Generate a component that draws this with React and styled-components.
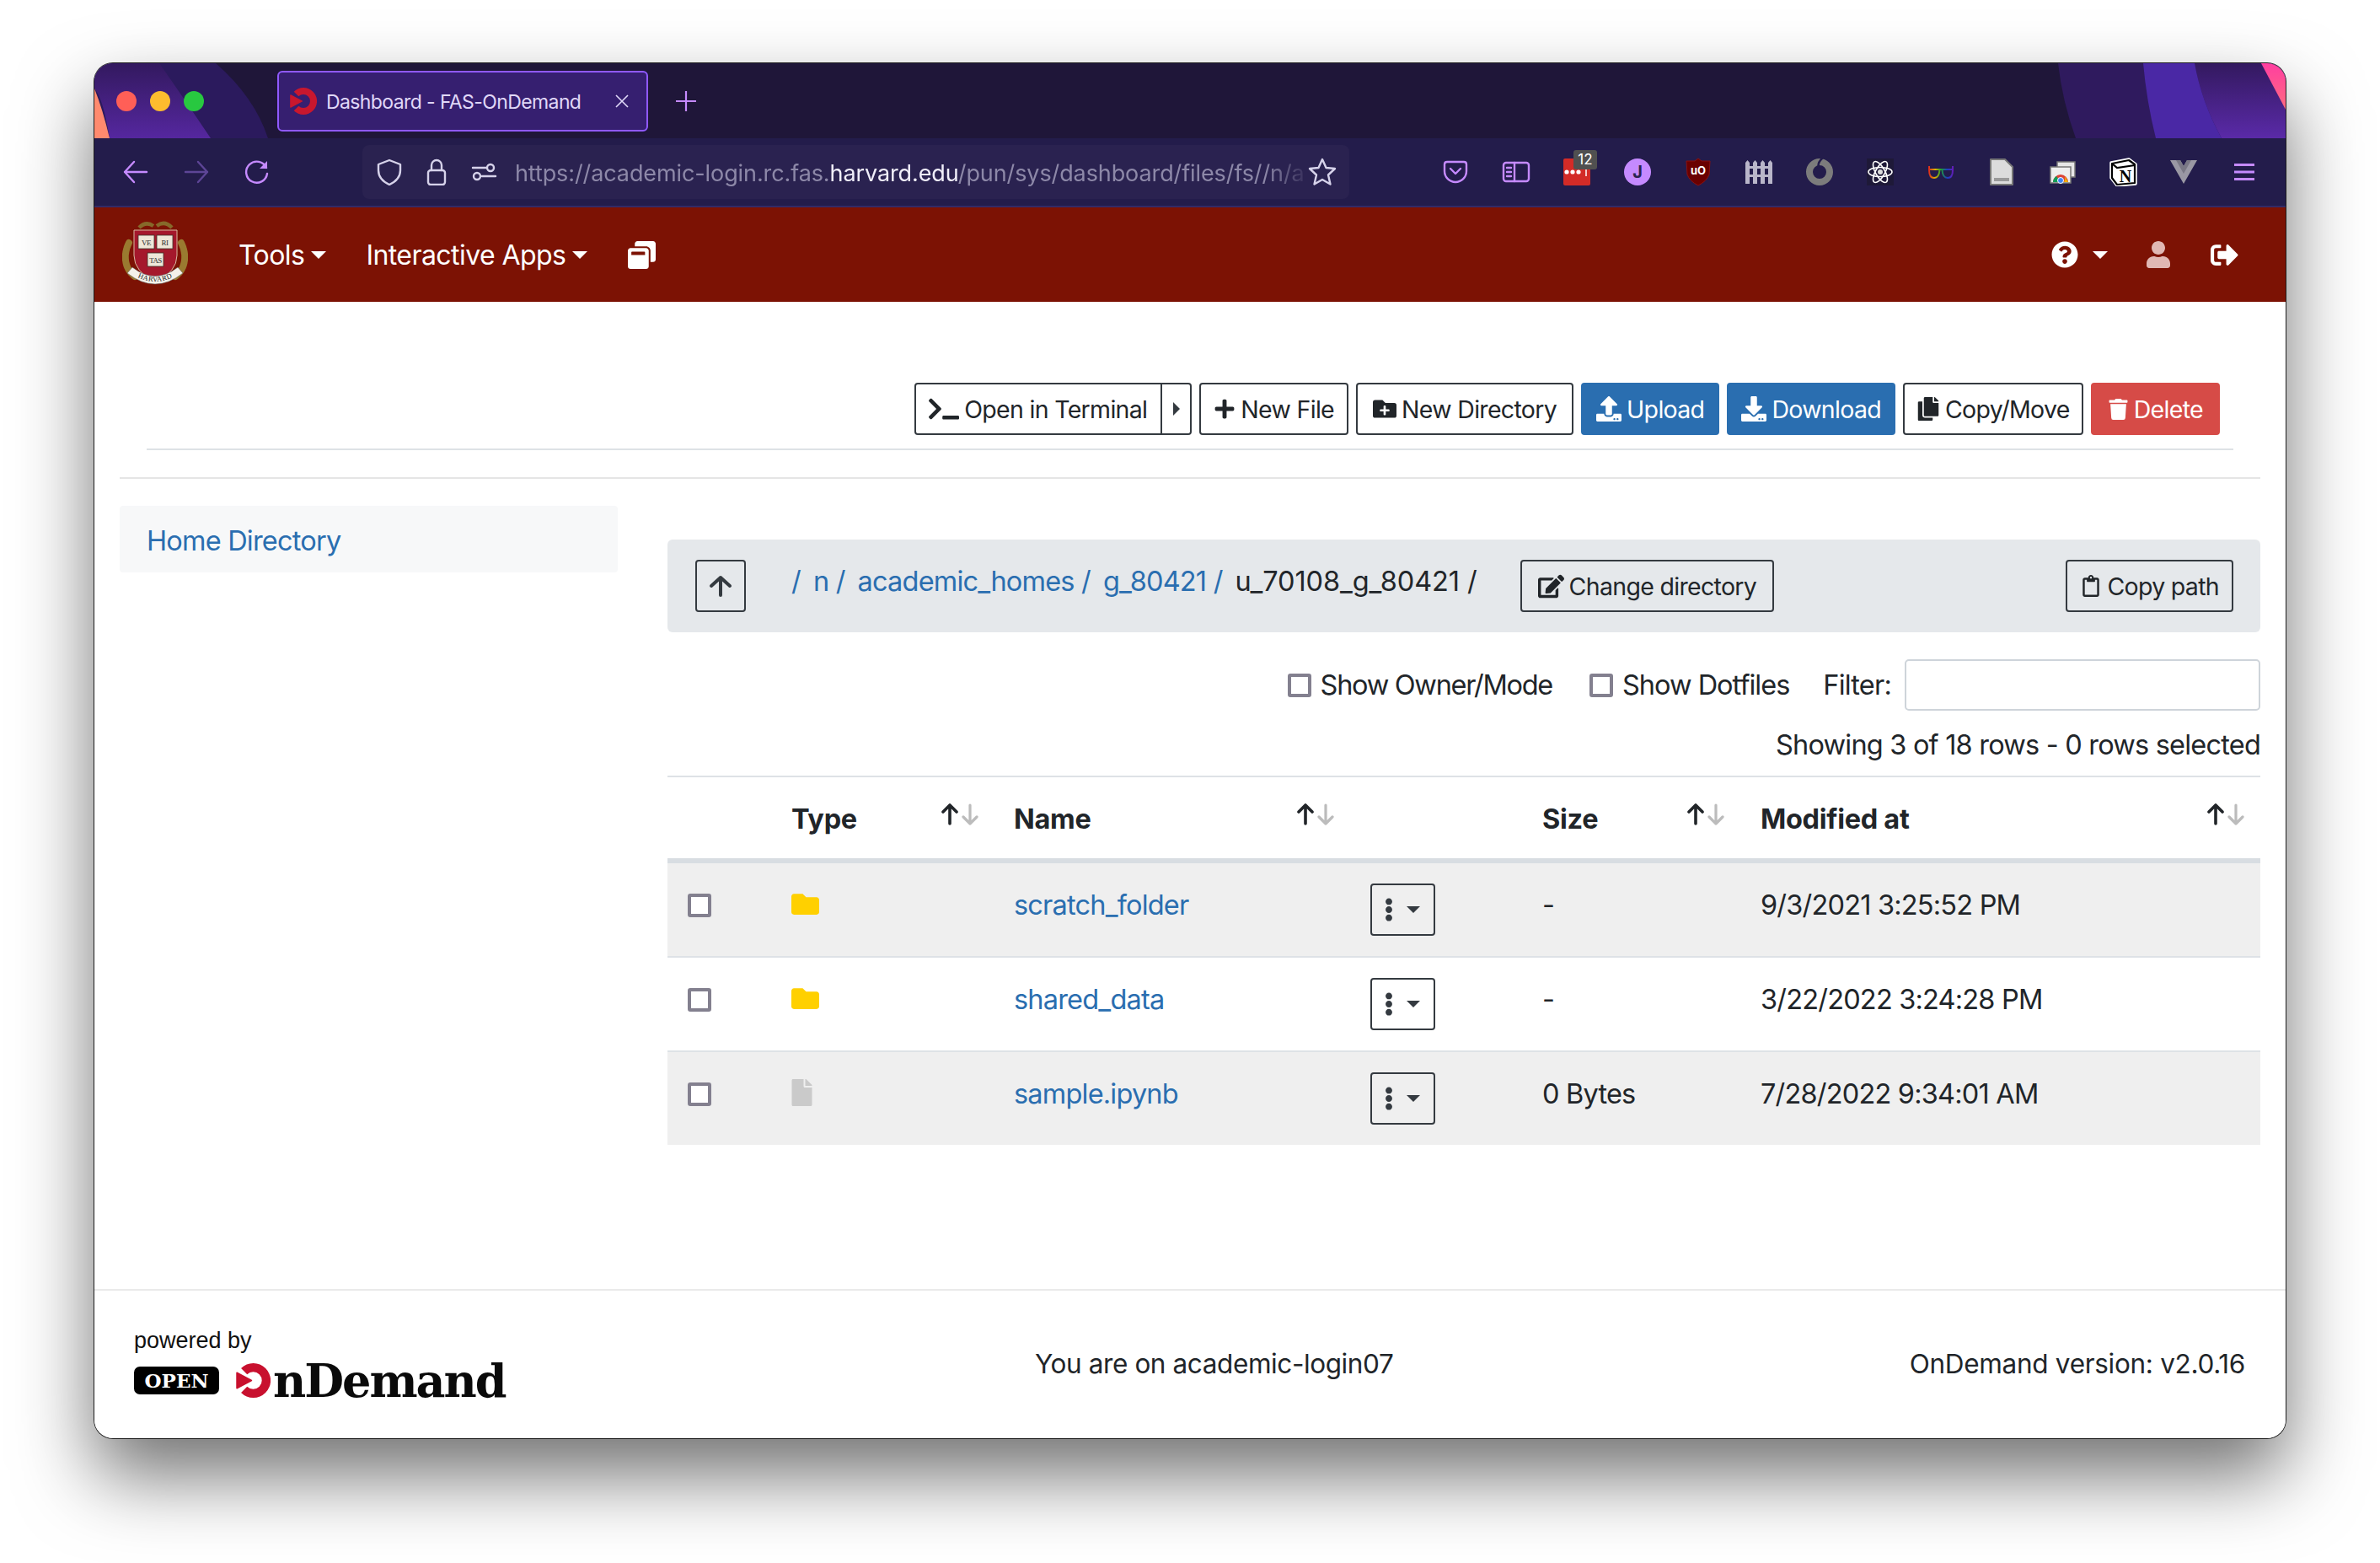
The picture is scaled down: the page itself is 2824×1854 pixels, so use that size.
import React from 'react';
import styled, { createGlobalStyle } from 'styled-components';
import { FaTerminal, FaPlus, FaFolderPlus, FaUpload, FaDownload, FaCopy, FaTrash, FaEdit, FaRegClipboard, FaFolder, FaFile, FaEllipsisV, FaQuestionCircle, FaUser, FaSignOutAlt, FaWindowRestore } from 'react-icons/fa';

const Global = createGlobalStyle`
  html, body { margin: 0; padding: 0; background: #fff; }
  body { width: 2824px; height: 1854px; overflow: hidden; font-family: Inter, Roboto, "Liberation Sans", sans-serif; color: #212529; }
  * { box-sizing: border-box; }
`;
const Page = styled.div`padding: 75px 112px 0;`;
const Win = styled.div`
  width: 2600px; height: 1631px; background: #fff; border-radius: 22px; overflow: hidden; position: relative;
  display: flex; flex-direction: column;
`;
const WinShadow = styled.div`
  border-radius: 22px; box-shadow: 0 44px 90px rgba(0,0,0,.56), 0 0 0 1px #2a2a2a;
`;
const TabBar = styled.div`
  height: 89px; background: #1f1639; display: flex; align-items: center; position: relative; padding-left: 217px; overflow: hidden;
`;
const Decor = styled.svg`position: absolute; top: 0; height: 89px;`;
const Lights = styled.div`position: absolute; left: 26px; top: 33px; display: flex; gap: 16px;`;
const Light = styled.span`width: 24px; height: 24px; border-radius: 50%; background: ${p => p.$c};`;
const Tab = styled.div`
  position: relative; width: 440px; height: 72px; margin-top: 1px; background: #361f70; border: 2px solid #9059ff; border-radius: 6px;
  display: flex; align-items: center; padding-left: 13px; color: #e0d8f8; font-size: 23px; letter-spacing: -.6px;
`;
const TabTitle = styled.span`margin-left: 11px; flex: 1; padding-top: 2px;`;
const TabClose = styled.svg`width: 16px; height: 16px; margin-right: 21px;`;
const NewTab = styled.svg`width: 26px; height: 26px; margin-left: 32px; position: relative;`;
const Toolbar = styled.div`
  height: 82px; background: #231c4b; border-bottom: 2px solid #332a66; display: flex; align-items: center; padding-left: 34px; position: relative;
`;
const NavBtn = styled.svg`width: 30px; height: 30px; margin-right: 42px; flex: none;`;
const UrlBar = styled.div`
  width: 1171px; height: 64px; background: #2a2250; border-radius: 8px; margin-left: 68px; display: flex; align-items: center; padding-left: 16px; position: relative; flex: none;
`;
const UrlIcon = styled.svg`width: 32px; height: 32px; margin-right: 24px; flex: none;`;
const UrlText = styled.div`
  font-size: 27px; color: #8d88a8; white-space: nowrap; letter-spacing: -.1px; flex: none; margin-left: -3px; padding-top: 2px;
  -webkit-mask-image: linear-gradient(90deg, #000 95%, rgba(0,0,0,.15) 100%);
  b { color: #f0eefa; font-weight: 400; }
`;
const Star = styled.svg`width: 34px; height: 34px; margin-left: auto; margin-right: 15px; flex: none;`;
const Ext = styled.div`display: flex; margin-left: 90px; align-items: center;`;
const ExtSlot = styled.div`width: 72px; height: 36px; display: flex; align-items: center; justify-content: center; position: relative;`;
const ExtSvg = styled.svg`width: 34px; height: 34px;`;
const Badge = styled.span`
  position: absolute; top: -8px; left: 32px; width: 28px; height: 23px; background: #505050; color: #fff; border-radius: 3px; font-size: 17px; text-align: center; line-height: 23px;
`;
const Nav = styled.div`
  height: 112px; background: #7c1204; display: flex; align-items: center; padding-left: 33px; padding-right: 56px; color: #fff; font-size: 32px; letter-spacing: -.56px;
`;
const NavItem = styled.div`display: flex; align-items: center; margin-right: ${p => p.$mr || 0}px; margin-left: ${p => p.$ml || 0}px; color: ${p => p.$c || '#fff'}; svg { display: block; }`;
const Caret = styled.span`
  width: 0; height: 0; border-left: 9px solid transparent; border-right: 9px solid transparent; border-top: 9px solid ${p => p.$c || '#fff'};
  margin-left: ${p => p.$ml || 8}px;
`;
const Spacer = styled.div`flex: 1;`;
const Content = styled.div`flex: 1; padding: 96px 30px 0; position: relative; letter-spacing: -.8px;`;
const ActionRow = styled.div`
  margin: 0 32px; height: 80px; border-bottom: 2px solid #dee2e6; display: flex; justify-content: flex-end; gap: 9px; padding-right: 16px; align-items: flex-start;
`;
const Btn = styled.div`
  height: 62px; padding: 0 ${p => p.$px || 17}px; display: flex; align-items: center; gap: ${p => p.$gap || 6}px; font-size: 28.5px; border-radius: 4px; white-space: nowrap; letter-spacing: -.68px;
  margin-left: ${p => p.$ml || 0}px;
  border: 2px solid ${p => p.$v === 'blue' ? '#2a6eb0' : p.$v === 'red' ? '#d64b47' : '#343a40'};
  background: ${p => p.$v === 'blue' ? '#2a6eb0' : p.$v === 'red' ? '#d64b47' : 'transparent'};
  color: ${p => p.$v ? '#fff' : '#212529'};
`;
const Split = styled.div`
  height: 62px; display: flex; border: 2px solid #343a40; border-radius: 4px; font-size: 28.5px; align-items: stretch; letter-spacing: -.68px;
`;
const SplitMain = styled.div`display: flex; align-items: center; gap: 6px; padding: 0 16px 0 15px; border-right: 2px solid #343a40; white-space: nowrap;`;
const SplitCaret = styled.div`display: flex; width: 33px; align-items: center; justify-content: center;`;
const CaretRight = styled.span`width: 0; height: 0; border-top: 8px solid transparent; border-bottom: 8px solid transparent; border-left: 8px solid #343a40;`;
const Hr = styled.div`height: 2px; background: #e5e5e5; margin-top: 32px;`;
const Cols = styled.div`display: flex; margin-top: 32px;`;
const Side = styled.div`
  width: 591px; height: 79px; background: #f7f8f9; border-radius: 4px; padding: 4px 0 0 32px; display: flex; align-items: center; color: #2a6eb0; font-size: 32.5px; flex: none;
`;
const Main = styled.div`margin-left: 59px; flex: 1;`;
const Crumbs = styled.div`
  margin-top: 40px; height: 110px; background: #e5e8eb; border-radius: 6px; display: flex; align-items: center; padding: 0 32px 0 33px; font-size: 32.5px;
`;
const UpBtn = styled.div`width: 60px; height: 62px; border: 2px solid #343a40; border-radius: 4px; display: flex; align-items: center; justify-content: center; flex: none;`;
const Path = styled.div`margin-left: 54px; display: flex; gap: 15px; margin-top: -11px; white-space: nowrap;`;
const PathLink = styled.span`color: ${p => p.$dark ? '#212529' : '#2a6eb0'}; letter-spacing: ${p => p.$dark ? '-.1px' : '-.8px'};`;
const Filters = styled.div`
  margin-top: 32px; height: 61px; display: flex; justify-content: flex-end; align-items: center; font-size: 32.5px;
`;
const Check = styled.span`
  display: inline-block; width: 28px; height: 28px; border: 4px solid #83808f; border-radius: 3px; background: #fff; flex: none; margin-right: ${p => p.$mr || 0}px;
`;
const FilterLabel = styled.span`margin-right: ${p => p.$mr}px; letter-spacing: ${p => p.$ls}px;`;
const Input = styled.div`width: 422px; height: 61px; border: 2px solid #ced4da; border-radius: 5px; background: #fff;`;
const Status = styled.div`margin-top: 21px; text-align: right; font-size: 32.5px; line-height: 40px;`;
const Grid = styled.div`display: grid; grid-template-columns: 147px 264px 423px 204px 259px 1fr; margin-top: 16px; border-top: 2px solid #dee2e6;`;
const Th = styled.div`
  height: 102px; border-bottom: 6px solid #d8dde2; display: flex; justify-content: space-between; padding-right: ${p => p.$pr || 0}px; font-weight: 700; font-size: 32.5px; padding-top: 30px; letter-spacing: -.3px;
`;
const SortSvg = styled.svg`width: 46px; height: 26px; flex: none; margin-top: 1px; fill: none; stroke-linecap: round; stroke-linejoin: round;`;
const Td = styled.div`
  height: ${p => p.$last ? 110 : 112}px; background: ${p => p.$odd ? '#efefef' : '#fff'}; border-bottom: ${p => p.$last ? 0 : 2}px solid #dee2e6;
  display: flex; align-items: flex-start; padding-top: ${p => p.$pt ?? 30}px; font-size: 32.5px; padding-left: ${p => p.$pl || 0}px; line-height: 40px;
  color: ${p => p.$link ? '#2a6eb0' : '#212529'};
  svg { display: block; }
`;
const FileGlyph = styled(FaFile)`width: 25px; height: 32px;`;
const MenuBtn = styled.div`width: 77px; height: 62px; border: 2px solid #343a40; border-radius: 4px; display: flex; align-items: center; padding-left: 6px; gap: 7px;`;
const MenuCaret = styled.span`width: 0; height: 0; border-left: 8px solid transparent; border-right: 8px solid transparent; border-top: 8px solid #343a40;`;
const Footer = styled.div`
  height: 177px; border-top: 2px solid #eaeaea; display: flex; align-items: center; padding: 0 48px 0 47px; font-size: 31.5px; letter-spacing: -.4px; position: relative;
`;
const Powered = styled.div`width: 1069px; flex: none; margin-bottom: 6px; letter-spacing: 0;`;
const PoweredText = styled.div`font-size: 27px; line-height: 34px; font-family: "Liberation Sans", sans-serif; color: #111;`;
const LogoRow = styled.div`display: flex; align-items: center; margin-top: 10px;`;
const OpenBadge = styled.span`
  width: 101px; height: 33px; background: #000; color: #fff; border-radius: 7px; font: 700 23px "DejaVu Serif", serif; display: flex; align-items: center; justify-content: center; flex: none;
`;
const LogoGap = styled.span`width: 20px; flex: none;`;
const Demand = styled.span`font: 700 54px/42px "DejaVu Serif", serif; color: #0a0a0a; margin-left: 3px; letter-spacing: -2px;`;
const Center = styled.div`margin-top: -2px;`;
const Right = styled.div`margin-top: -2px; margin-left: auto; letter-spacing: -.3px;`;

const Pur = '#c58aff';
const stroke = { fill: 'none', strokeWidth: 2.4, strokeLinecap: 'round', strokeLinejoin: 'round' };

const OdMark = ({ size = 41, c = '#c8102e' }) => (
  <svg width={size} height={size} viewBox="0 0 40 40" style={{ flex: 'none' }}>
    <path d="M5.900 5.900 A20 20 0 1 1 5.900 34.100 L12.900 27.100 A10 10 0 1 0 12.900 12.900 Z" fill={c} />
    <path d="M1 11 L18 20 L1 29 Z" fill={c} stroke={c} strokeWidth="1.500" strokeLinejoin="round" />
  </svg>
);

const Harvard = () => (
  <svg width="78" height="80" viewBox="0 0 78 80" style={{ flex: 'none' }}>
    <g fill="none" stroke="#9a7a30" strokeWidth="8" strokeLinecap="round" strokeDasharray="6 2">
      <path d="M8 26 C0 42 4 58 15 66" />
      <path d="M70 26 C78 42 74 58 63 66" />
    </g>
    <path d="M20 8 Q28 0 37 6 M41 6 Q50 -1 59 8" stroke="#86692a" strokeWidth="4.500" fill="none" />
    <path d="M14 11 H65 V41 Q65 60 39.500 73 Q14 60 14 41 Z" fill="#a5182c" stroke="#d8b9a0" strokeWidth="1" />
    <g fill="#eee7d8" stroke="#3c3228" strokeWidth=".8">
      <rect x="19" y="17" width="19" height="16" />
      <rect x="41" y="17" width="19" height="16" />
      <rect x="30" y="38" width="19" height="16" />
    </g>
    <g fontFamily="Liberation Serif, serif" fontSize="9" fill="#2c2c2c" textAnchor="middle">
      <text x="28.500" y="28.500">VE</text>
      <text x="50.500" y="28.500">RI</text>
      <text x="39.500" y="49.500">TAS</text>
    </g>
    <path d="M6 62 Q39 88 72 62 L66 55 Q39 76 12 55 Z" fill="#f4f1ea" stroke="#555" strokeWidth=".5" />
    <path id="hvp" d="M13 64 Q39 80 65 64" fill="none" />
    <text fontFamily="Liberation Serif, serif" fontSize="8.500" fill="#222" letterSpacing=".4">
      <textPath href="#hvp" startOffset="50%" textAnchor="middle">HARVARD</textPath>
    </text>
  </svg>
);

const extIcons = [
  <ExtSvg viewBox="0 0 34 34" stroke={Pur} {...stroke}><path d="M4 8 Q4 5 7 5 H27 Q30 5 30 8 V16 A13 13 0 0 1 4 16 Z" /><path d="M11 13 L17 19 L23 13" /></ExtSvg>,
  <ExtSvg viewBox="0 0 34 34" stroke={Pur} {...stroke}><rect x="2" y="6" width="30" height="22" rx="3" /><path d="M15 6 V28 M6 12 H11 M6 17 H11 M6 22 H11" /></ExtSvg>,
  <ExtSvg viewBox="0 0 34 34"><rect x="1" y="1" width="32" height="32" rx="2" fill="#d32b27" /><circle cx="5" cy="17" r="2.600" fill="#fff" /><circle cx="12" cy="17" r="2.600" fill="#fff" /><circle cx="19" cy="17" r="2.600" fill="#fff" /><path d="M28 12 V22" stroke="#fff" strokeWidth="1.500" /></ExtSvg>,
  <ExtSvg viewBox="0 0 34 34"><circle cx="17" cy="17" r="16" fill={Pur} /><text x="17" y="24" textAnchor="middle" fontSize="20" fontWeight="700" fontFamily="Inter, sans-serif" fill="#2a2250">J</text></ExtSvg>,
  <ExtSvg viewBox="0 0 34 34"><path d="M17 1 L21 4 H31 L30 20 Q27 28 17 33 Q7 28 4 20 L3 4 H13 Z" fill="#6a0000" stroke="#8b1111" /><text x="17" y="20" textAnchor="middle" fontSize="13" fontWeight="700" fontFamily="Inter, sans-serif" fill="#fff">uO</text></ExtSvg>,
  <ExtSvg viewBox="0 0 34 34" fill="#b9b6c9"><path d="M1 6 L3.500 3 L6 6 V31 H1 Z M10 6 L12.500 3 L15 6 V31 H10 Z M19 6 L21.500 3 L24 6 V31 H19 Z M28 6 L30.500 3 L33 6 V31 H28 Z" /><rect x="1" y="10" width="32" height="3" /><rect x="1" y="20" width="32" height="3" /></ExtSvg>,
  <ExtSvg viewBox="0 0 34 34" fill="none"><circle cx="17" cy="17" r="12" stroke="#7c7c7c" strokeWidth="8" /><path d="M21 0 Q14 6 16 12" stroke="#231c4b" strokeWidth="2.500" /></ExtSvg>,
  <ExtSvg viewBox="0 0 34 34"><rect x="1" y="1" width="32" height="32" fill="#1e1938" /><g fill="none" stroke="#fff" strokeWidth="1.600"><ellipse cx="17" cy="17" rx="14" ry="5.500" /><ellipse cx="17" cy="17" rx="14" ry="5.500" transform="rotate(60 17 17)" /><ellipse cx="17" cy="17" rx="14" ry="5.500" transform="rotate(120 17 17)" /></g><circle cx="17" cy="17" r="3" fill="#ddd" /></ExtSvg>,
  <ExtSvg viewBox="0 0 34 34" fill="none">
    <defs><linearGradient id="rb" gradientUnits="userSpaceOnUse" x1="2" y1="0" x2="32" y2="0"><stop offset="0" stopColor="#d8201f" /><stop offset=".28" stopColor="#e0b000" /><stop offset=".5" stopColor="#1fa12f" /><stop offset=".75" stopColor="#1a3fc4" /><stop offset="1" stopColor="#6a1ab5" /></linearGradient></defs>
    <path d="M3 10 V15 Q3 24 9 24 Q15 24 15.500 14.500 M18.500 14.500 Q19 24 25 24 Q31 24 31 15 V10 M3 14 H31" stroke="url(#rb)" strokeWidth="2" />
  </ExtSvg>,
  <ExtSvg viewBox="0 0 34 34"><path d="M4 2 H21 L30 11 V32 H4 Z" fill="#dcdcdc" stroke="#777" strokeWidth="2" strokeLinejoin="round" /><rect x="8" y="24" width="18" height="4" fill="#9a9a9a" /></ExtSvg>,
  <ExtSvg viewBox="0 0 34 34"><rect x="11" y="5" width="21" height="18" fill="#e6e6e6" stroke="#777" strokeWidth="1.500" /><rect x="3" y="11" width="24" height="19" fill="#eee" stroke="#777" strokeWidth="1.500" /><path d="M6 29 A9 9 0 0 1 24 29 Z" fill="#db4437" /><path d="M6 29 A9 9 0 0 1 10 22 L15 29 Z" fill="#0f9d58" /><path d="M19 29 A9 9 0 0 0 20 22 L24 29 Z" fill="#f4b400" /><circle cx="15" cy="27" r="3.500" fill="#4285f4" stroke="#fff" strokeWidth="1" /></ExtSvg>,
  <ExtSvg viewBox="0 0 34 34"><path d="M3 6 L24 2 L32 8 V31 L10 33 L3 24 Z" fill="#fff" stroke="#fff" strokeWidth="3.500" strokeLinejoin="round" /><path d="M4 7 L24 3 L31 8 V30 L10 32 L4 24 Z" fill="#fff" stroke="#000" strokeWidth="2.200" strokeLinejoin="round" /><path d="M4 7 L10 12 L31 9" fill="none" stroke="#000" strokeWidth="2.200" /><text x="20" y="29" textAnchor="middle" fontFamily="Liberation Serif, serif" fontSize="20" fontWeight="700" fill="#000">N</text></ExtSvg>,
  <ExtSvg viewBox="0 0 34 34"><path d="M1 3 H13 L17 10 L21 3 H33 L17 31 Z" fill="#9a98a4" /><path d="M8 3 H13 L17 10 L21 3 H26 L17 19 Z" fill="#7a7885" /></ExtSvg>,
  <ExtSvg viewBox="0 0 34 34" stroke={Pur} strokeWidth="2.800" fill="none"><path d="M5 8.500 H29 M5 17 H29 M5 25.500 H29" /></ExtSvg>,
];

const SortIcon = () => (
  <SortSvg viewBox="0 0 46 26">
    <g stroke="#212529" strokeWidth="3.600"><path d="M10 24 V2 M2 10 L10 2 L18 10" /></g>
    <g stroke="#bcbcbc" strokeWidth="3.200"><path d="M34 2 V24 M26 16 L34 24 L42 16" /></g>
  </SortSvg>
);

const rows = [
  { icon: <FaFolder size={33} color="#ffd000" />, name: 'scratch_folder', size: '-', date: '9/3/2021 3:25:52 PM' },
  { icon: <FaFolder size={33} color="#ffd000" />, name: 'shared_data', size: '-', date: '3/22/2022 3:24:28 PM' },
  { icon: <FileGlyph color="#cacaca" />, name: 'sample.ipynb', size: '0 Bytes', date: '7/28/2022 9:34:01 AM' },
];

export default function App() {
  return (
    <>
      <Global />
      <Page>
        <WinShadow>
          <Win>
            <TabBar>
              <Decor viewBox="0 0 240 89" width="240" style={{ left: 0 }}>
                <defs><linearGradient id="lg" x1="0" y1="0" x2="0" y2="1"><stop offset="0" stopColor="#33195f" /><stop offset="1" stopColor="#55279f" /></linearGradient></defs>
                <path d="M0 0 H144 Q190 40 206 89 H0 Z" fill="#2b1a5d" />
                <path d="M77 0 Q105 40 138 89 H18 Q10 40 0 30 V0 Z" fill="url(#lg)" />
                <path d="M0 30 Q10 55 18 89 H0 Z" fill="#ff8a6e" />
              </Decor>
              <Decor viewBox="0 0 280 89" width="280" style={{ right: 0 }}>
                <defs>
                  <linearGradient id="rc" x1="0" y1="0" x2="0" y2="1"><stop offset="0" stopColor="#33195f" /><stop offset="1" stopColor="#5a2aa8" /></linearGradient>
                  <linearGradient id="pk" x1="0" y1="0" x2="0" y2="1"><stop offset="0" stopColor="#ff3fa0" /><stop offset="1" stopColor="#ff6a80" /></linearGradient>
                </defs>
                <path d="M10 0 H280 V89 H31 Q15 45 10 0 Z" fill="#2f1a5e" />
                <path d="M172 0 H280 V89 H204 Q180 45 172 0 Z" fill="url(#rc)" />
                <path d="M111 0 H172 Q180 45 204 89 H126 Q115 45 111 0 Z" fill="#4a28a5" />
                <path d="M251 0 H280 V55 Z" fill="url(#pk)" />
              </Decor>
              <Lights>
                <Light $c="#ff5f57" />
                <Light $c="#febc2e" />
                <Light $c="#28c840" />
              </Lights>
              <Tab>
                <OdMark size={32} c="#c8172e" />
                <TabTitle>Dashboard - FAS-OnDemand</TabTitle>
                <TabClose viewBox="0 0 16 16" stroke="#e0d8f8" strokeWidth="1.600"><path d="M1 1 L15 15 M15 1 L1 15" /></TabClose>
              </Tab>
              <NewTab viewBox="0 0 26 26" stroke={Pur} strokeWidth="2.200"><path d="M13 1 V25 M1 13 H25" /></NewTab>
            </TabBar>
            <Toolbar>
              <NavBtn viewBox="0 0 30 30" stroke={Pur} {...stroke}><path d="M28 15 H2 M13 3 L2 15 L13 27" /></NavBtn>
              <NavBtn viewBox="0 0 30 30" stroke="#5d4596" {...stroke}><path d="M2 15 H28 M17 3 L28 15 L17 27" /></NavBtn>
              <NavBtn viewBox="0 0 30 30" stroke={Pur} {...stroke}><path d="M26 10 A12.500 12.500 0 1 0 27 17" /><path d="M27 2 V11 H18 Z" fill={Pur} stroke="none" /></NavBtn>
              <UrlBar>
                <UrlIcon viewBox="0 0 32 32" stroke="#d6d2ea" {...stroke}><path d="M16 2 L29 7 V14 Q29 25 16 31 Q3 25 3 14 V7 Z" /></UrlIcon>
                <UrlIcon viewBox="0 0 32 32" stroke="#d6d2ea" {...stroke}><rect x="6" y="14" width="20" height="17" rx="3" /><path d="M10 14 V8 A6 6 0 0 1 22 8 V14" /></UrlIcon>
                <UrlIcon viewBox="0 0 32 32" stroke="#d6d2ea" {...stroke}><circle cx="8" cy="21" r="4" /><circle cx="24" cy="11" r="4" /><path d="M3 11 H19 M14 21 H30" /></UrlIcon>
                <UrlText>https://academic-login.rc.fas.<b>harvard.edu</b>/pun/sys/dashboard/files/fs//n/a</UrlText>
                <Star viewBox="0 0 34 34" stroke="#d6d2ea" {...stroke}><path d="M17 2 L21.500 12 L32 13 L24 20.500 L26.500 31.500 L17 26 L7.500 31.500 L10 20.500 L2 13 L12.500 12 Z" /></Star>
              </UrlBar>
              <Ext>
                {extIcons.map((ic, i) => (
                  <ExtSlot key={i}>{ic}{i === 2 && <Badge>12</Badge>}</ExtSlot>
                ))}
              </Ext>
            </Toolbar>
            <Nav>
              <Harvard />
              <NavItem $ml={60} $mr={47}>Tools<Caret /></NavItem>
              <NavItem $mr={48}>Interactive Apps<Caret /></NavItem>
              <NavItem><FaWindowRestore size={33} /></NavItem>
              <Spacer />
              <NavItem><FaQuestionCircle size={32} /><Caret $ml={17} /></NavItem>
              <NavItem $ml={44} $c="#e0b8b4"><FaUser size={32} /></NavItem>
              <NavItem $ml={46}><FaSignOutAlt size={33} /></NavItem>
            </Nav>
            <Content>
              <ActionRow>
                <Split>
                  <SplitMain><FaTerminal size={36} /> Open in Terminal</SplitMain>
                  <SplitCaret><CaretRight /></SplitCaret>
                </Split>
                <Btn $px={15}><FaPlus size={26} /> New File</Btn>
                <Btn $px={18}><FaFolderPlus size={28} /> New Directory</Btn>
                <Btn $v="blue" $px={16}><FaUpload size={30} /> Upload</Btn>
                <Btn $v="blue" $px={15}><FaDownload size={30} /> Download</Btn>
                <Btn $px={14}><FaCopy size={28} /> Copy/Move</Btn>
                <Btn $v="red" $px={18}><FaTrash size={25} /> Delete</Btn>
              </ActionRow>
              <Hr />
              <Cols>
                <Side>Home Directory</Side>
                <Main>
                  <Crumbs>
                    <UpBtn>
                      <svg width="28" height="26" viewBox="0 0 28 26" fill="none" stroke="#343a40" strokeWidth="4" strokeLinecap="round" strokeLinejoin="round"><path d="M14 24 V3 M3 13 L14 3 L25 13" /></svg>
                    </UpBtn>
                    <Path>
                      <PathLink>/</PathLink>
                      <PathLink>n /</PathLink>
                      <PathLink>academic_homes /</PathLink>
                      <PathLink>g_80421 /</PathLink>
                      <PathLink $dark>u_70108_g_80421 /</PathLink>
                    </Path>
                    <Btn $px={19} $ml={51}><FaEdit size={31} /> Change directory</Btn>
                    <Spacer />
                    <Btn $px={15}><FaRegClipboard size={26} /> Copy path</Btn>
                  </Crumbs>
                  <Filters>
                    <Check $mr={11} />
                    <FilterLabel $mr={44} $ls={-1.3}>Show Owner/Mode</FilterLabel>
                    <Check $mr={11} />
                    <FilterLabel $mr={40} $ls={-1}>Show Dotfiles</FilterLabel>
                    <FilterLabel $mr={16} $ls={-.8}>Filter:</FilterLabel>
                    <Input />
                  </Filters>
                  <Status>Showing 3 of 18 rows - 0 rows selected</Status>
                  <Grid>
                    <Th />
                    <Th $pr={40}>Type<SortIcon /></Th>
                    <Th $pr={41}>Name<SortIcon /></Th>
                    <Th />
                    <Th $pr={41}>Size<SortIcon /></Th>
                    <Th $pr={17}>Modified at<SortIcon /></Th>
                    {rows.map((r, i) => {
                      const odd = i % 2 === 0;
                      const last = i === 2;
                      return (
                        <React.Fragment key={r.name}>
                          <Td $odd={odd} $last={last} $pl={24} $pt={36}><Check /></Td>
                          <Td $odd={odd} $last={last} $pt={32}>{r.icon}</Td>
                          <Td $odd={odd} $last={last} $link>{r.name}</Td>
                          <Td $odd={odd} $last={last} $pt={24}><MenuBtn><FaEllipsisV size={28} color="#343a40" /><MenuCaret /></MenuBtn></Td>
                          <Td $odd={odd} $last={last}>{r.size}</Td>
                          <Td $odd={odd} $last={last}>{r.date}</Td>
                        </React.Fragment>
                      );
                    })}
                  </Grid>
                </Main>
              </Cols>
            </Content>
            <Footer>
              <Powered>
                <PoweredText>powered by</PoweredText>
                <LogoRow>
                  <OpenBadge>OPEN</OpenBadge>
                  <LogoGap />
                  <OdMark size={41} />
                  <Demand>nDemand</Demand>
                </LogoRow>
              </Powered>
              <Center>You are on academic-login07</Center>
              <Right>OnDemand version: v2.0.16</Right>
            </Footer>
          </Win>
        </WinShadow>
      </Page>
    </>
  );
}
